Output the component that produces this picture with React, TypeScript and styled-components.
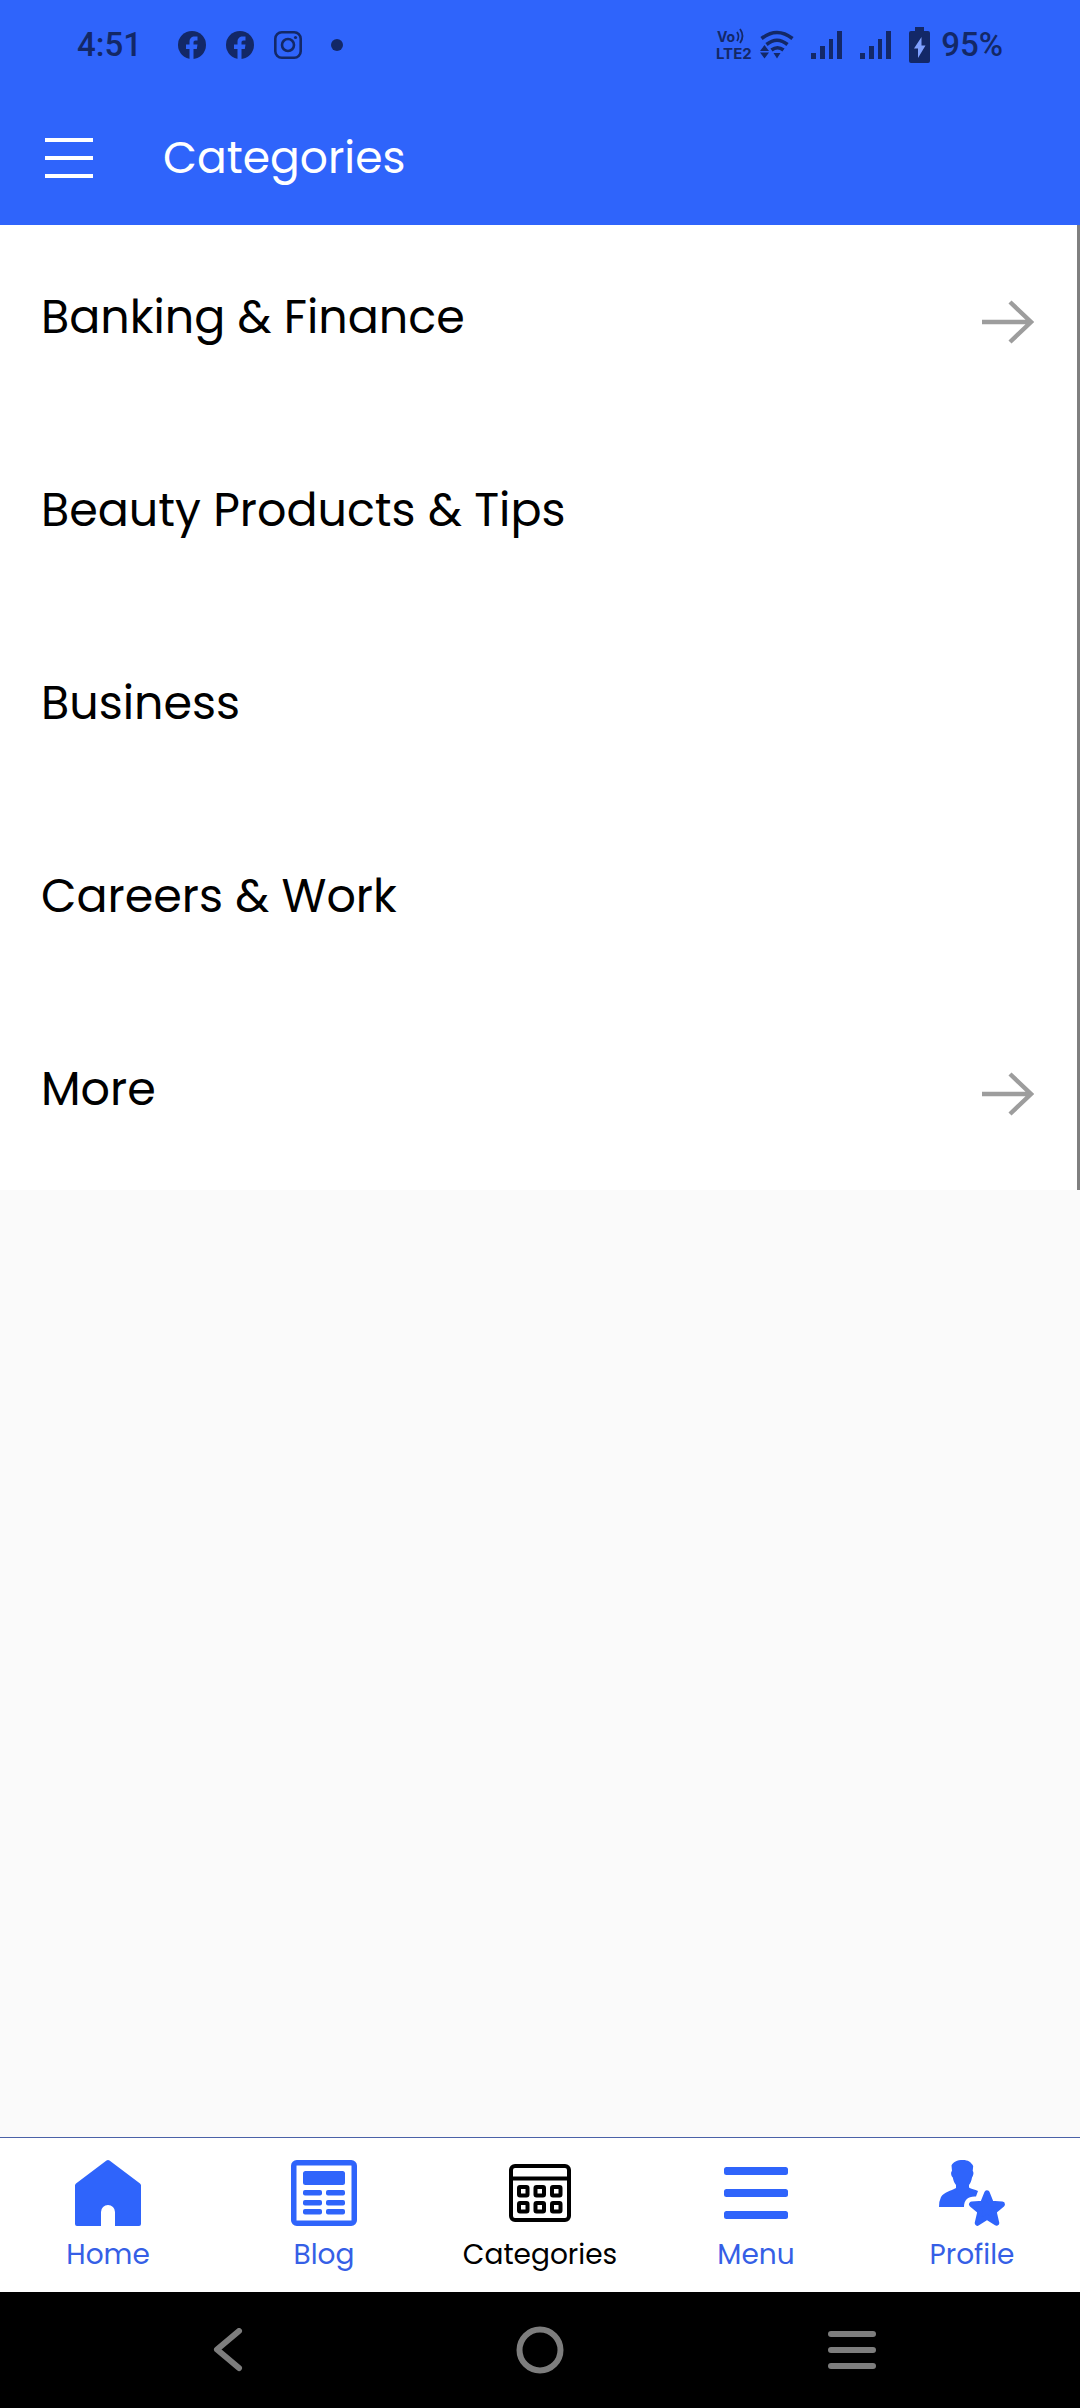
import React from "react";
import styled, { createGlobalStyle } from "styled-components";

const blue = "#2f64fb";
const labelBlue = "#365fe6";
const ink = "#132867";
const grey = "#7d7d7d";

const GlobalStyle = createGlobalStyle`
  * { box-sizing: border-box; }
  body { margin: 0; font-family: Poppins, Inter, sans-serif; background: #fafafa; }
  svg { display: block; flex: none; }
  button { border: 0; padding: 0; background: none; cursor: pointer; }
`;

const Screen = styled.div`
  min-height: 100vh;
  display: flex;
  flex-direction: column;
`;

const StatusBar = styled.div`
  display: flex;
  justify-content: space-between;
  align-items: center;
  height: 90px;
  padding: 0 77px;
  background: ${blue};
  color: ${ink};
  font: 500 33px/40px Roboto, sans-serif;
`;

const StatusGroup = styled.div<{ $gap: number }>`
  display: flex;
  align-items: center;
  gap: ${(p) => p.$gap}px;
`;

const AppBar = styled.header`
  display: flex;
  align-items: center;
  gap: 70px;
  height: 135px;
  padding: 0 45px;
  background: ${blue};
  color: #fff;
`;

const Title = styled.h1`
  margin: 0;
  font-size: 44px;
  line-height: 64px;
  font-weight: 400;
`;

const Content = styled.main`
  flex: 1;
`;

const CategoryList = styled.ul`
  margin: 0;
  padding: 0;
  list-style: none;
  background: #fff;
  border-right: 3px solid #808080;
`;

const CategoryLink = styled.a`
  display: flex;
  align-items: center;
  justify-content: space-between;
  height: 193px;
  padding: 0 43px 0 41px;
  color: #000;
  text-decoration: none;
`;

const CategoryName = styled.span`
  padding-bottom: 10px;
  font-size: 46px;
  line-height: 64px;
`;

const TabBar = styled.nav`
  display: grid;
  grid-template-columns: repeat(5, 1fr);
  height: 155px;
  border-top: 1px solid #4a62a8;
  background: #fff;
`;

const Tab = styled.a<{ $active?: boolean }>`
  display: flex;
  flex-direction: column;
  align-items: center;
  gap: 11px;
  padding-top: 22px;
  color: ${(p) => (p.$active ? "#000" : blue)};
  text-decoration: none;
`;

const TabLabel = styled.span<{ $active?: boolean }>`
  color: ${(p) => (p.$active ? "#000" : labelBlue)};
  font-size: 28px;
  line-height: 36px;
  font-weight: 400;
`;

const SystemBar = styled.div`
  display: flex;
  align-items: center;
  justify-content: space-between;
  height: 116px;
  padding: 0 200px;
  background: #000;
`;

const SystemButton = styled.button`
  display: grid;
  place-items: center;
  width: 56px;
  height: 56px;
`;

const FacebookIcon = () => (
  <svg width="28" height="28" viewBox="0 0 28 28">
    <circle cx="14" cy="14" r="14" fill={ink} />
    <path d="M11.500 28V18H8v-4.500h3.500V11c0-3.600 2-5.500 5.300-5.500h2.700v4h-2c-1.400 0-2 .7-2 2v2h4l-.7 4.500h-3.300v10z" fill={blue} />
  </svg>
);

const InstagramIcon = () => (
  <svg width="28" height="28" viewBox="0 0 28 28" fill="none" stroke={ink} strokeWidth="2.600">
    <rect x="1.300" y="1.300" width="25.400" height="25.400" rx="6.500" />
    <circle cx="14" cy="14" r="6" />
    <circle cx="21.500" cy="6.500" r="1.600" fill={ink} stroke="none" />
  </svg>
);

const DotIcon = () => (
  <svg width="24" height="12" viewBox="0 0 24 12">
    <circle cx="15" cy="6" r="6" fill={ink} />
  </svg>
);

const VolteIcon = () => (
  <svg width="42" height="40" viewBox="0 0 42 40" fill={ink} fontFamily="Inter, sans-serif" fontWeight="700">
    <text x="2" y="17" fontSize="14">Vo</text>
    <text x="1" y="34" fontSize="15">LTE2</text>
    <path d="M22 7q3 4.500 0 9M25 4q5 7 0 14" fill="none" stroke={ink} strokeWidth="1.800" />
  </svg>
);

const WifiIcon = () => (
  <svg width="34" height="30" viewBox="0 0 34 30" fill="none" stroke={ink} strokeWidth="3.600">
    <path d="M1.500 8.500q15.500-12 31 0M6.500 14.500q10.500-8.500 21 0M11.500 20q6-4.500 12 0" />
    <path d="M0 21l4.500-6 4.500 6zM0 22.500h9l-4.500 6zM13.500 23h7l-3.500 5.500z" fill={ink} stroke="none" />
  </svg>
);

const SignalIcon = () => (
  <svg width="32" height="28" viewBox="0 0 32 28" fill={ink}>
    <path d="M0 22h5v6H0zM9 15h5v13H9zM18 8h4v20h-4zM26 0h5v28h-5z" />
  </svg>
);

const BatteryIcon = () => (
  <svg width="21" height="36" viewBox="0 0 21 36">
    <path d="M6 0h9v4h4q2 0 2 2v28q0 2-2 2H2q-2 0-2-2V6q0-2 2-2h4z" fill={ink} />
    <path d="M12.500 10L5 21.500h4V31l7.500-12.500h-4z" fill="#7fa0ff" />
  </svg>
);

const HamburgerIcon = () => (
  <svg width="48" height="40" viewBox="0 0 48 40" fill="#fff">
    <path d="M0 0h48v4H0zM0 18h48v4H0zM0 36h48v4H0z" />
  </svg>
);

const ArrowIcon = () => (
  <svg width="52" height="44" viewBox="0 0 52 44" fill="none" stroke="#9d9d9d" strokeWidth="4.400">
    <path d="M0 22h49M28 2l21 20-21 20" />
  </svg>
);

const HomeIcon = () => (
  <svg width="66" height="66" viewBox="0 0 66 66" fill="currentColor">
    <path d="M31.500.5q1.500-1 3 0L65 23.500q1 1 1 2V64q0 2-2 2H40V52a7 7 0 0 0-14 0v14H2q-2 0-2-2V25.500q0-1 1-2z" />
  </svg>
);

const BlogIcon = () => (
  <svg width="66" height="66" viewBox="0 0 66 66" fill="currentColor">
    <rect x="2.750" y="2.750" width="60.500" height="60.500" rx="3" fill="none" stroke="currentColor" strokeWidth="5.500" />
    <rect x="12" y="11" width="42" height="14" rx="2.500" />
    {[30, 40, 49].map((y) => (
      <React.Fragment key={y}>
        <rect x="12" y={y} width="19" height="5.500" rx="2" />
        <rect x="35" y={y} width="19" height="5.500" rx="2" />
      </React.Fragment>
    ))}
  </svg>
);

const CategoriesIcon = () => (
  <svg width="66" height="66" viewBox="0 0 66 66" fill="none" stroke="currentColor" strokeWidth="4">
    <rect x="4" y="6" width="58" height="54" rx="4" />
    <path d="M4 18.500h58" />
    {[27, 43].map((y) =>
      [12, 28.5, 45].map((x) => <rect key={`${x}-${y}`} x={x} y={y} width="8.500" height="8.500" rx="1" />)
    )}
  </svg>
);

const MenuIcon = () => (
  <svg width="66" height="66" viewBox="0 0 66 66" fill="currentColor">
    {[7, 29, 51].map((y) => (
      <rect key={y} x="1" y={y} width="64" height="8" rx="2.500" />
    ))}
  </svg>
);

const ProfileIcon = () => (
  <svg width="66" height="66" viewBox="0 0 66 66" fill="currentColor">
    <path d="M24 0C18 0 14 2 12.500 5.500l.5 5.500c-1.500 1-1 5 .8 6.500.7 4 1.700 5.500 3.200 7.500v3C12 31 5 32 2 37Q0 41 0 47h25c0-7 4-11 12-10.500L39 31c-3-1.500-7-2-9-3.500V25c1.500-2 2.500-4 3-7.500 1.500-2 2-5.500.7-6.500l.5-5C32 2 29 0 24 0z" />
    <path d="M48 33l4.200 10.500 11 .8-8.400 7.200 2.700 11.500L48 57l-9.500 6 2.700-11.500-8.400-7.200 11-.8z" stroke="currentColor" strokeWidth="5.500" strokeLinejoin="round" />
  </svg>
);

const BackIcon = () => (
  <svg width="30" height="44" viewBox="0 0 30 44" fill="none" stroke={grey} strokeWidth="6" strokeLinecap="round" strokeLinejoin="round">
    <path d="M26 3L4 21.500 26 40" />
  </svg>
);

const CircleIcon = () => (
  <svg width="48" height="48" viewBox="0 0 48 48" fill="none" stroke={grey} strokeWidth="6">
    <circle cx="24" cy="24" r="20.500" />
  </svg>
);

const RecentsIcon = () => (
  <svg width="48" height="38" viewBox="0 0 48 38" fill={grey}>
    {[0, 16, 32].map((y) => (
      <rect key={y} y={y} width="48" height="6" rx="3" />
    ))}
  </svg>
);

const categories = [
  { name: "Banking & Finance", nested: true },
  { name: "Beauty Products & Tips" },
  { name: "Business" },
  { name: "Careers & Work" },
  { name: "More", nested: true },
];

const tabs = [
  { label: "Home", Icon: HomeIcon },
  { label: "Blog", Icon: BlogIcon },
  { label: "Categories", Icon: CategoriesIcon, active: true },
  { label: "Menu", Icon: MenuIcon },
  { label: "Profile", Icon: ProfileIcon },
];

export default function App() {
  return (
    <Screen>
      <GlobalStyle />
      <StatusBar>
        <StatusGroup $gap={36}>
          <span>4:51</span>
          <StatusGroup $gap={20}>
            <FacebookIcon />
            <FacebookIcon />
            <InstagramIcon />
            <DotIcon />
          </StatusGroup>
        </StatusGroup>
        <StatusGroup $gap={17}>
          <StatusGroup $gap={3}>
            <VolteIcon />
            <WifiIcon />
          </StatusGroup>
          <SignalIcon />
          <SignalIcon />
          <StatusGroup $gap={11}>
            <BatteryIcon />
            <span>95%</span>
          </StatusGroup>
        </StatusGroup>
      </StatusBar>
      <AppBar>
        <button type="button" aria-label="Open menu">
          <HamburgerIcon />
        </button>
        <Title>Categories</Title>
      </AppBar>
      <Content>
        <CategoryList>
          {categories.map(({ name, nested }) => (
            <li key={name}>
              <CategoryLink href="#">
                <CategoryName>{name}</CategoryName>
                {nested && <ArrowIcon />}
              </CategoryLink>
            </li>
          ))}
        </CategoryList>
      </Content>
      <TabBar>
        {tabs.map(({ label, Icon, active }) => (
          <Tab key={label} href="#" $active={active}>
            <Icon />
            <TabLabel $active={active}>{label}</TabLabel>
          </Tab>
        ))}
      </TabBar>
      <SystemBar>
        <SystemButton type="button" aria-label="Back">
          <BackIcon />
        </SystemButton>
        <SystemButton type="button" aria-label="Home screen">
          <CircleIcon />
        </SystemButton>
        <SystemButton type="button" aria-label="Recent apps">
          <RecentsIcon />
        </SystemButton>
      </SystemBar>
    </Screen>
  );
}
